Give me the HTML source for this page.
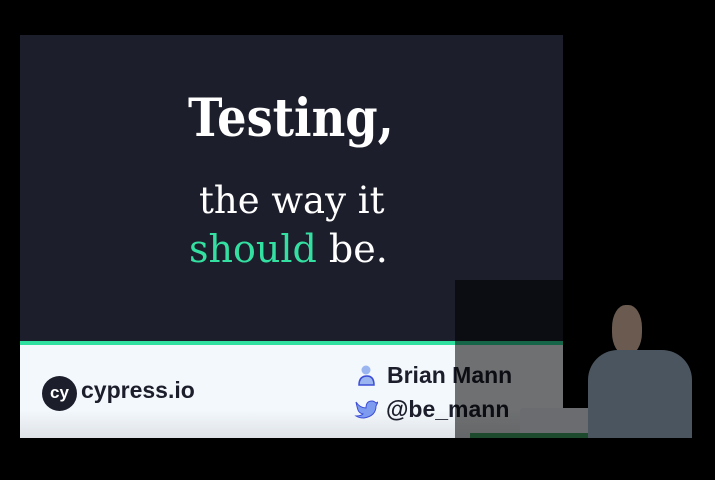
<html><head><style>
body{margin:0;width:715px;height:480px;background:#000;position:relative;overflow:hidden;font-family:"Liberation Sans",sans-serif}
.s{position:absolute;left:20px;top:35px;width:543px;height:306px;background:#1c1e2b}
.g{position:absolute;left:20px;top:341px;width:543px;height:4px;background:#2fe0a0}
.w{position:absolute;left:20px;top:345px;width:543px;height:93px;background:linear-gradient(#f3f8fc 70%,#dfe3e8)}
.t{position:absolute;color:#fff;font-family:"DejaVu Serif",serif;white-space:nowrap;transform-origin:left top}
.ov{position:absolute;left:455px;top:280px;width:108px;height:158px;background:rgba(0,0,0,0.55)}
.f{position:absolute;color:#1c1e2b;font-weight:bold;white-space:nowrap}
</style></head><body>
<div class="s"></div><div class="g"></div><div class="w"></div>
<div class="t" style="left:188px;top:88px;font-size:52px;font-weight:bold;transform:scaleX(0.89)">Testing,</div>
<div class="t" style="left:199px;top:179px;font-size:37px">the way it</div>
<div class="t" style="left:189px;top:227px;font-size:38px"><span style="color:#34e0a1">should</span> be.</div>
<div style="position:absolute;left:42px;top:376px;width:35px;height:35px;border-radius:50%;background:#1c1e2b;color:#fff;font-weight:bold;font-size:17px;line-height:33px;text-align:center">cy</div>
<div class="f" style="left:81px;top:377px;font-size:23px">cypress.io</div>
<svg style="position:absolute;left:357px;top:364px" width="20" height="24"><circle cx="9" cy="6" r="4.5" fill="#9bb5f0"/><path d="M2 21 Q2 12 10 12 Q17 12 17 21Z" fill="#9bb5f0" stroke="#3d4ed6" stroke-width="1.5"/></svg>
<svg style="position:absolute;left:354px;top:398px" width="24" height="22"><path d="M2 4 Q6 10 12 10 Q12 3 18 3 Q20 3 22 5 L24 4 L22 8 Q22 18 10 20 Q5 20 2 18 Q7 18 9 16 Q5 15 4 12 Q3 9 2 4Z" fill="#7d9cf0" stroke="#3d4ed6" stroke-width="1"/></svg>
<div class="f" style="left:387px;top:362px;font-size:23px">Brian Mann</div>
<div class="f" style="left:386px;top:396px;font-size:23px">@be_mann</div>
<div class="ov"></div>
<div style="position:absolute;left:520px;top:408px;width:80px;height:26px;background:#6a6c70;border-radius:3px 3px 0 0"></div>
<div style="position:absolute;left:470px;top:433px;width:130px;height:5px;background:#1d4a2c"></div>
<div style="position:absolute;left:612px;top:305px;width:30px;height:50px;border-radius:45%;background:#6a5a50"></div>
<div style="position:absolute;left:588px;top:350px;width:104px;height:88px;border-radius:30px 30px 0 0;background:#4a5560"></div>
</body></html>
